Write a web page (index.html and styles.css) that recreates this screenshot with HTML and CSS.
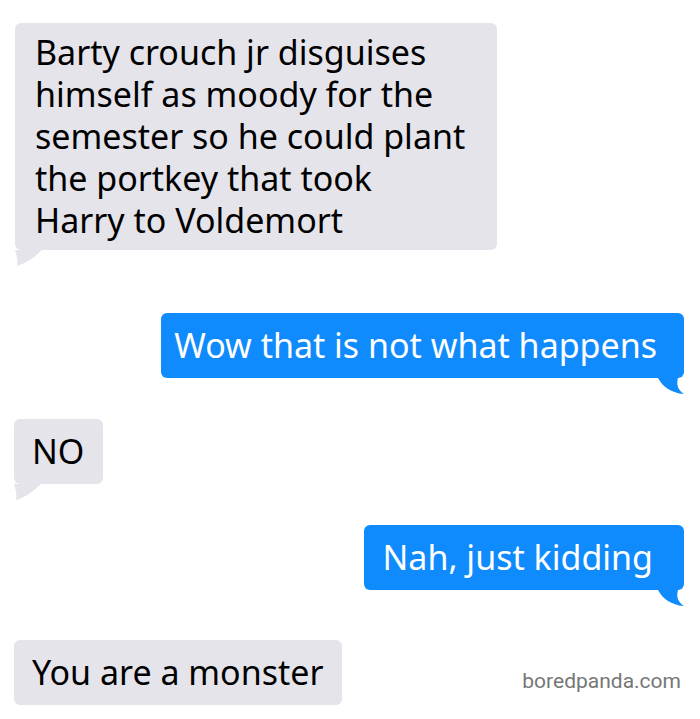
FILE: index.html
```html
<!DOCTYPE html>
<html lang="en">
<head>
    <meta charset="UTF-8">
    <title>Messages</title>
    <link rel="stylesheet" href="styles.css">
</head>
<body>

    <div class="thread">
        <div class="row in first">
            <div class="bubble long">
                Barty crouch jr disguises<br>
                himself as moody for the<br>
                semester so he could plant<br>
                the portkey that took<br>
                Harry to Voldemort
                <svg class="tail" width="28" height="16" viewBox="0 0 28 16"><path d="M0,0 C2,6 3,11 2,16 C12,13 20,7 27,0 Z"/></svg>
            </div>
        </div>

        <div class="row out gap-lg">
            <div class="bubble">
                Wow that is not what happens
                <svg class="tail" width="26" height="16" viewBox="0 0 26 16"><path d="M0,0 C5,9 13,15 26,16 C20,12 18,7 20,0 Z"/></svg>
            </div>
        </div>

        <div class="row in">
            <div class="bubble">
                NO
                <svg class="tail" width="28" height="16" viewBox="0 0 28 16"><path d="M0,0 C2,6 3,11 2,16 C12,13 20,7 27,0 Z"/></svg>
            </div>
        </div>

        <div class="row out">
            <div class="bubble wide-pad">
                Nah, just kidding
                <svg class="tail" width="26" height="16" viewBox="0 0 26 16"><path d="M0,0 C5,9 13,15 26,16 C20,12 18,7 20,0 Z"/></svg>
            </div>
        </div>

        <div class="row in last">
            <div class="bubble">
                You are a monster
                <svg class="tail" width="28" height="16" viewBox="0 0 28 16"><path d="M0,0 C2,6 3,11 2,16 C12,13 20,7 27,0 Z"/></svg>
            </div>
            <span class="credit">boredpanda.com</span>
        </div>
    </div>

</body>
</html>
```

FILE: styles.css
```css
body {
    margin: 0;
    background: #fff;
    font-family: 'Noto Sans', sans-serif;
    overflow: hidden;
}

.thread {
    display: flex;
    flex-direction: column;
    padding: 23px 16px 0 14px;
}

.row {
    display: flex;
    margin-top: 41px;
}

.row.first {
    margin-top: 0;
    padding-left: 1px;
}

.row.gap-lg {
    margin-top: 63px;
}

.row.last {
    margin-top: 50px;
    justify-content: space-between;
    align-items: flex-end;
}

.row.out {
    justify-content: flex-end;
}

.bubble {
    position: relative;
    font-size: 34px;
    line-height: 42px;
    padding: 11px 19px 12px 18px;
    border-radius: 6px;
    color: #000;
}

.bubble.long {
    padding: 8px 32px 9px 20px;
}

.in .bubble {
    background: #e5e4ea;
}

.out .bubble {
    background: #0f8bfd;
    color: #fff;
    padding: 11px 27px 12px 13px;
}

.out .bubble.wide-pad {
    padding-left: 18px;
    padding-right: 31px;
}

/* little speech tails under each bubble */
.tail {
    position: absolute;
    top: 100%;
    display: block;
}

.in .tail {
    left: 0;
    fill: #e5e4ea;
}

.out .tail {
    right: 0;
    fill: #0f8bfd;
}

.credit {
    font-family: 'Roboto', sans-serif;
    font-size: 21px;
    color: #777;
    margin-bottom: 12px;
    margin-right: 3px;
}
```
